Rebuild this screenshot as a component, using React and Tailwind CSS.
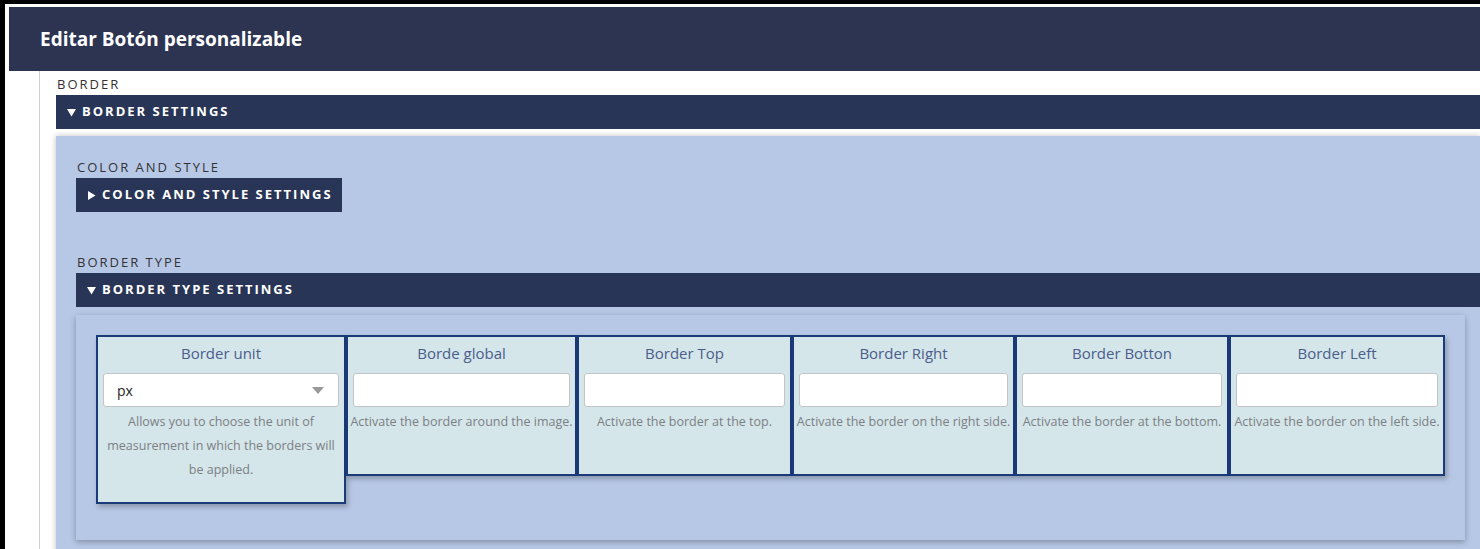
const font = { fontFamily: '"Open Sans", "Noto Sans", Arial, sans-serif' }

const fields = [
    { title: "Border unit", desc: "Allows you to choose the unit of measurement in which the borders will be applied.", select: true, w: "w-[250px]", h: "h-[169px]" },
    { title: "Borde global", desc: "Activate the border around the image.", oneLine: true, w: "w-[231px]", h: "h-[141px]" },
    { title: "Border Top", desc: "Activate the border at the top.", oneLine: true, w: "w-[215px]", h: "h-[141px]" },
    { title: "Border Right", desc: "Activate the border on the right side.", oneLine: true, w: "w-[223px]", h: "h-[141px]" },
    { title: "Border Botton", desc: "Activate the border at the bottom.", oneLine: true, w: "w-[214px]", h: "h-[141px]" },
    { title: "Border Left", desc: "Activate the border on the left side.", oneLine: true, w: "w-[216px]", h: "h-[141px]" },
]

const Label = ({ children, className = "" }) => (
    <div className={"text-[13px] leading-[16px] tracking-[2px] uppercase text-[#333] " + className}>{children}</div>
)

// little caret, points down when open
const Caret = ({ open }) => (
    <svg width="9" height="9" viewBox="0 0 9 9" className="mr-[6px] shrink-0" fill="white">
        {open ? <polygon points="0,1 9,1 4.5,8.5" /> : <polygon points="1,0 8.5,4.5 1,9" />}
    </svg>
)

const Bar = ({ open, children, className = "" }) => (
    <div className={"h-[34px] bg-[#283556] text-white flex items-center pl-[11px] text-[13px] font-bold tracking-[2px] uppercase " + className}>
        <Caret open={open} />
        {children}
    </div>
)

const FieldCard = ({ field }) => (
    <div className={`${field.w} ${field.h} shrink-0 bg-[#d4e6ea] border-2 border-[#1b3a78] px-[5px] pt-[5px] shadow-[2px_3px_5px_rgba(0,0,0,0.25)] flex flex-col`}>
        <div className="text-center text-[15px] leading-[22px] text-[#4b5d8a]">{field.title}</div>
        {field.select ? (
            <div className="mt-[9px] h-[34px] bg-white border border-[#c4c4c4] rounded-[3px] flex items-center justify-between pl-[13px] pr-[14px]">
                <span className="text-[14px] text-[#222]">px</span>
                <span className="w-0 h-0 border-l-[6px] border-r-[6px] border-t-[7px] border-l-transparent border-r-transparent border-t-[#999]" />
            </div>
        ) : (
            <div className="mt-[9px] h-[34px] bg-white border border-[#c4c4c4] rounded-[3px]" />
        )}
        <div className={"mt-[3px] text-center text-[12.5px] leading-[24px] text-[#7c7f84] " + (field.oneLine ? "whitespace-nowrap -mx-[5px]" : "")}>
            {field.desc}
        </div>
    </div>
)

export default function App() {
    return (
        <div className="bg-black h-[549px] overflow-hidden pl-[5px] pt-[4px]" style={font}>
            <div className="bg-white h-full pl-[4px] pt-[3px] flex flex-col">
                <div className="h-[64px] shrink-0 bg-[#2d3452] flex items-center pl-[31px] text-white text-[19px] font-bold">
                    Editar Botón personalizable
                </div>
                <div className="flex flex-1 min-h-0">
                    <div className="ml-[30px] w-[17px] border-l border-[#cfcfcf] shrink-0" />
                    <div className="flex-1 min-w-0">
                        <Label className="mt-[5px] mb-[3px] pl-[1px]">Border</Label>
                        <Bar open>Border settings</Bar>
                        <div className="mt-[7px] bg-[#b7c8e6] pl-[20px] pt-[23px] pb-[20px] shadow-[0_0_6px_rgba(0,0,0,0.25)] h-[420px]">
                            <Label className="mb-[3px] pl-[1px]">Color and style</Label>
                            <Bar className="w-[266px]">Color and style settings</Bar>
                            <Label className="mt-[42px] mb-[3px] pl-[1px]">Border type</Label>
                            <Bar open>Border type settings</Bar>
                            <div className="mt-[8px] mr-[15px] h-[225px] p-[20px] bg-[#b7c8e6] shadow-[0_2px_6px_rgba(0,0,0,0.3)]">
                                <div className="flex items-start">
                                    {fields.map((f) => (
                                        <FieldCard key={f.title} field={f} />
                                    ))}
                                </div>
                            </div>
                        </div>
                    </div>
                </div>
            </div>
        </div>
    )
}
